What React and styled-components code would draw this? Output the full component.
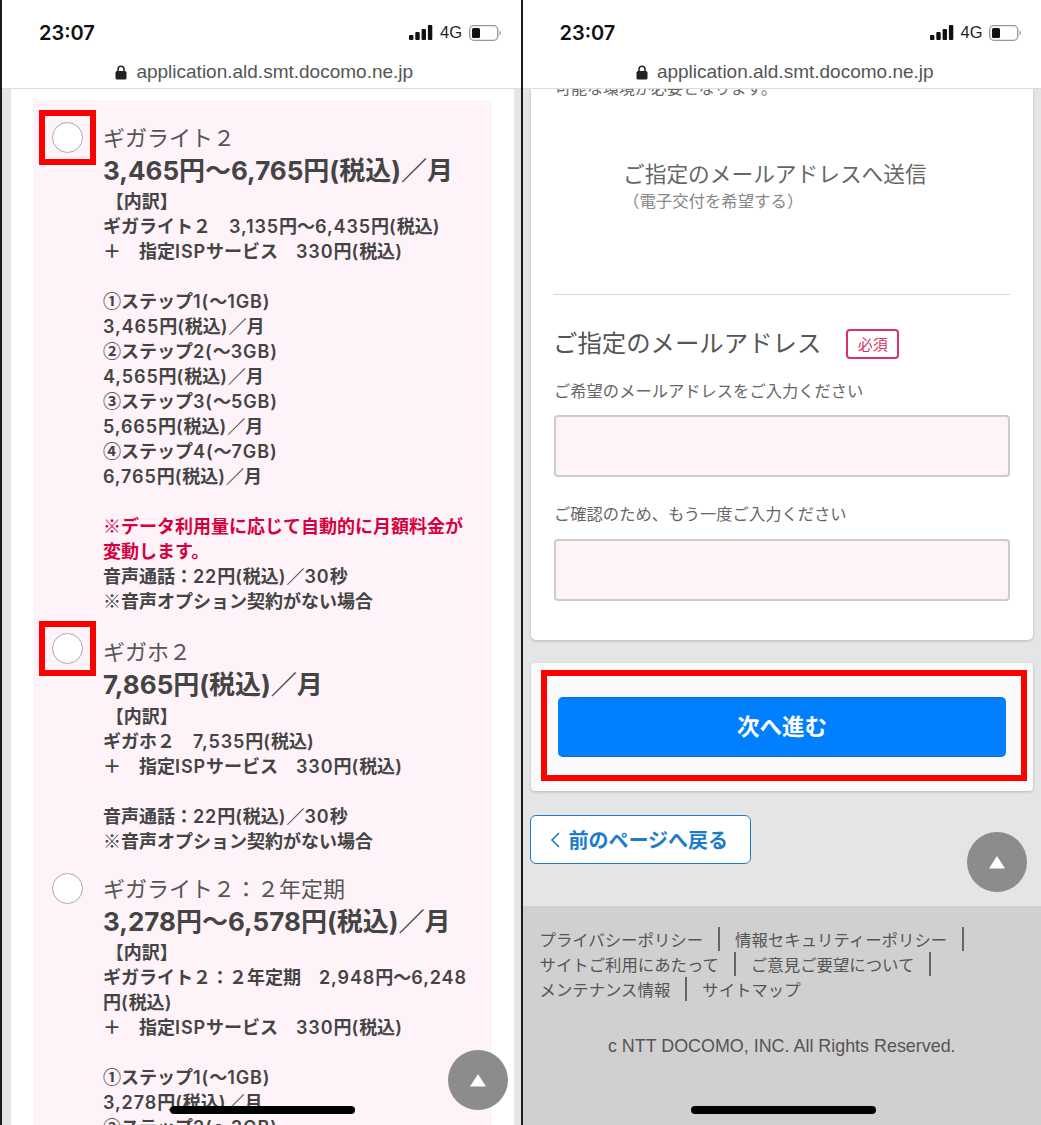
import React from 'react';
import styled, { createGlobalStyle } from 'styled-components';

const GlobalStyle = createGlobalStyle`
    html, body { margin: 0; padding: 0; background: #fff; }
    body { font-family: "Liberation Sans", "Noto Sans CJK JP", sans-serif; }
    * { box-sizing: border-box; }
`

const plans = [
    {
        name: 'ギガライト２',
        price: '3,465円〜6,765円(税込)／月',
        marked: true,
        titleGap: 12,
        priceGap: 1.5,
        lines: [
            'ギガライト２　3,135円〜6,435円(税込)',
            '＋　指定ISPサービス　330円(税込)',
            '',
            '①ステップ1(〜1GB)', '3,465円(税込)／月',
            '②ステップ2(〜3GB)', '4,565円(税込)／月',
            '③ステップ3(〜5GB)', '5,665円(税込)／月',
            '④ステップ4(〜7GB)', '6,765円(税込)／月',
            '',
        ],
        warn: ['※データ利用量に応じて自動的に月額料金が', '変動します。'],
        tail: ['音声通話：22円(税込)／30秒', '※音声オプション契約がない場合'],
    },
    {
        name: 'ギガホ２',
        price: '7,865円(税込)／月',
        marked: true,
        titleGap: 15,
        priceGap: 3.5,
        lines: ['ギガホ２　7,535円(税込)', '＋　指定ISPサービス　330円(税込)', ''],
        tail: ['音声通話：22円(税込)／30秒', '※音声オプション契約がない場合'],
    },
    {
        name: 'ギガライト２：２年定期',
        price: '3,278円〜6,578円(税込)／月',
        titleGap: 12,
        priceGap: 2,
        lines: [
            'ギガライト２：２年定期　2,948円〜6,248',
            '円(税込)',
            '＋　指定ISPサービス　330円(税込)',
            '',
            '①ステップ1(〜1GB)', '3,278円(税込)／月', '②ステップ2(〜3GB)',
        ],
    },
];

const footerRows = [
    [['プライバシーポリシー', true], ['情報セキュリティーポリシー', true]],
    [['サイトご利用にあたって', true], ['ご意見ご要望について', true]],
    [['メンテナンス情報', true], ['サイトマップ', false]],
];

// latin runs get a little more room, circled digits and ※ must come from the CJK font
function splitRuns(line) {
    return line.split(/([①②③④※]|[0-9A-Za-z,()]+)/).map((part, i) => {
        if (i % 2 === 0) return part;
        return /^[①②③④※]$/.test(part) ? <Mark key={i}>{part}</Mark> : <Latin key={i}>{part}</Latin>;
    });
}

function StatusHeader() {
    return (
        <Header>
            <StatusRow>
                <Clock>23:07</Clock>
                <StatusRight>
                    <svg width="24" height="15" viewBox="0 0 24 15">
                        <rect x="0" y="10" width="4.4" height="5" rx="1" fill="#111" />
                        <rect x="6.3" y="7" width="4.4" height="8" rx="1" fill="#111" />
                        <rect x="12.6" y="4" width="4.4" height="11" rx="1" fill="#111" />
                        <rect x="18.9" y="0" width="4.4" height="15" rx="1" fill="#111" />
                    </svg>
                    <Network>4G</Network>
                    <svg width="32" height="16" viewBox="0 0 32 16">
                        <rect x="0.7" y="0.7" width="28" height="14.6" rx="4" fill="none" stroke="#999" strokeWidth="1.3" />
                        <rect x="3" y="3" width="8" height="10" rx="1.5" fill="#111" />
                        <path d="M30.5 5.5c1 .6 1.4 1.4 1.4 2.5s-.4 1.9-1.4 2.5z" fill="#999" />
                    </svg>
                </StatusRight>
            </StatusRow>
            <UrlRow>
                <svg width="12" height="15" viewBox="0 0 12 15">
                    <path d="M3 6.5V4.2a3 3 0 0 1 6 0v2.3" fill="none" stroke="#222" strokeWidth="1.5" />
                    <rect x="0.5" y="6" width="11" height="8.6" rx="1.6" fill="#222" />
                </svg>
                <span>application.ald.smt.docomo.ne.jp</span>
            </UrlRow>
        </Header>
    )
}

function Overlay({ right, bottom }) {
    return (
        <>
            <ScrollTop $right={right} $bottom={bottom}>
                <svg width="18" height="14" viewBox="0 0 18 14"><path d="M9 1l8 12.5H1z" fill="#fff" /></svg>
            </ScrollTop>
            <HomeBar />
        </>
    )
}

function App() {
    return (
        <Page>
            <GlobalStyle />
            <Phone>
                <StatusHeader />
                <LeftBody>
                    <Card>
                        <PlanPanel>
                            {plans.map((plan) => (
                                <Plan key={plan.name}>
                                    <RadioCell $marked={plan.marked}><Radio /></RadioCell>
                                    <div>
                                        <PlanName $gap={plan.titleGap}>{plan.name}</PlanName>
                                        <PlanPrice $gap={plan.priceGap}>{plan.price}</PlanPrice>
                                        <Detail>&thinsp;【内訳】</Detail>
                                        {plan.lines.map((line, i) => <Detail key={i}>{splitRuns(line)}</Detail>)}
                                        {plan.warn && plan.warn.map((line) => <Detail key={line} $warn>{splitRuns(line)}</Detail>)}
                                        {plan.tail && plan.tail.map((line) => <Detail key={line}>{splitRuns(line)}</Detail>)}
                                    </div>
                                </Plan>
                            ))}
                        </PlanPanel>
                    </Card>
                </LeftBody>
                <Overlay right={12.5} bottom={15} />
            </Phone>
            <Phone>
                <StatusHeader />
                <RightBody>
                    <FormCard>
                        <CutText>可能な環境が必要となります。</CutText>
                        <SendBlock>
                            <SendTitle>ご指定のメールアドレスへ送信</SendTitle>
                            <SendSub>（電子交付を希望する）</SendSub>
                        </SendBlock>
                        <Divider />
                        <FieldHead>
                            <FieldTitle>ご指定のメールアドレス</FieldTitle>
                            <Required>必須</Required>
                        </FieldHead>
                        <FieldLabel>ご希望のメールアドレスをご入力ください</FieldLabel>
                        <TextBox />
                        <FieldLabel $second>ご確認のため、もう一度ご入力ください</FieldLabel>
                        <TextBox />
                    </FormCard>
                    <ActionCard>
                        <ActionMark>
                            <NextButton>次へ進む</NextButton>
                        </ActionMark>
                    </ActionCard>
                    <BackButton>
                        <svg width="12" height="18" viewBox="0 0 12 18"><path d="M10 2L3 9l7 7" fill="none" stroke="#1b7ccc" strokeWidth="1.6" /></svg>
                        前のページへ戻る
                    </BackButton>
                    <Footer>
                        <FooterLinks>
                            {footerRows.map((row, r) => (
                                <FooterRow key={r}>
                                    {row.map(([label, sep]) => <FooterLink key={label} $sep={sep}>{label}</FooterLink>)}
                                </FooterRow>
                            ))}
                        </FooterLinks>
                        <Copyright>c NTT DOCOMO, INC. All Rights Reserved.</Copyright>
                    </Footer>
                </RightBody>
                <Overlay right={14} bottom={233} />
            </Phone>
        </Page>
    )
}

export default App;

const Page = styled.div`
    display: flex;
    width: 1041px;
    height: 1125px;
    overflow: hidden;
`

const Phone = styled.div`
    position: relative;
    display: flex;
    flex-direction: column;
    flex: 0 0 520.5px;
    height: 1125px;
    overflow: hidden;
    border-left: 2px solid #1c1c1c;
    background: #e5e5e5;
`

const Header = styled.div`
    flex: none;
    height: 89px;
    background: #fff;
    border-bottom: 1px solid #ddd;
    position: relative;
    z-index: 1;
`

const StatusRow = styled.div`
    display: flex;
    align-items: center;
    justify-content: space-between;
    height: 65px;
    padding: 0 20px 0 37px;
`

const Clock = styled.span`
    font-family: Inter, sans-serif;
    font-size: 20px;
    font-weight: 600;
    color: #111;
`

const StatusRight = styled.div`
    display: flex;
    align-items: center;
    gap: 6.5px;
`

const Network = styled.span`
    font-size: 16.5px;
    color: #222;
`

const UrlRow = styled.div`
    display: flex;
    align-items: center;
    justify-content: center;
    gap: 9px;
    font-size: 19px;
    color: #555;
    margin-left: 6px;
    margin-top: -4px;
`

const LeftBody = styled.div`
    flex: 1;
    min-height: 0;
    padding: 0 6.5px 0 9px;
`

const Card = styled.div`
    height: 100%;
    background: #fff;
    padding: 11px 22px 0;
`

const PlanPanel = styled.div`
    background: #fdf3f9;
    padding: 10px 0 0 6px;
    height: 100%;
    overflow: hidden;
    color: #444;
    font-family: Inter, "Noto Sans CJK JP", sans-serif;
`

const Plan = styled.div`
    display: grid;
    grid-template-columns: 64px 1fr;
    padding-right: 20px;
    margin-bottom: 7px;
`

const RadioCell = styled.div`
    width: 57px;
    height: 55px;
    display: flex;
    align-items: center;
    justify-content: center;
    border: 6px solid ${(p) => (p.$marked ? '#ff0000' : 'transparent')};
`

const Radio = styled.span`
    width: 31px;
    height: 31px;
    border-radius: 50%;
    border: 1px solid #aaa;
    background: #fff;
`

const PlanName = styled.div`
    font-size: 22px;
    line-height: 33px;
    height: 33px;
    margin-top: ${(p) => p.$gap}px;
    color: #555;
`

const PlanPrice = styled.div`
    font-size: 26px;
    font-weight: 700;
    line-height: 32px;
    color: #444;
    margin-bottom: ${(p) => p.$gap}px;
    white-space: nowrap;
`

const Detail = styled.div`
    font-size: 18px;
    font-weight: 700;
    line-height: 25px;
    height: 25px;
    white-space: nowrap;
    color: ${(p) => (p.$warn ? '#d6003f' : '#444')};
`

const Mark = styled.span`
    font-family: "Noto Sans CJK JP", sans-serif;
    line-height: 1;
`

const Latin = styled.span`
    font-weight: 600;
    letter-spacing: 0.9px;
`

const RightBody = styled.div`
    flex: 1;
    min-height: 0;
    display: flex;
    flex-direction: column;
`

const FormCard = styled.div`
    margin: 0 8px 0 8.5px;
    height: 551px;
    background: #fff;
    border-radius: 0 0 5px 5px;
    box-shadow: 0 1px 3px rgba(0, 0, 0, 0.2);
    padding: 0 22px;
    overflow: hidden;
`

const CutText = styled.div`
    font-size: 16px;
    line-height: 20px;
    margin-top: -10px;
    padding-left: 2px;
    color: #666;
`

const SendBlock = styled.div`
    height: 195px;
    padding: 60px 0 0 70px;
`

const SendTitle = styled.div`
    font-size: 21.7px;
    line-height: 32px;
    color: #666;
`

const SendSub = styled.div`
    font-size: 16.4px;
    line-height: 20px;
    color: #888;
`

const Divider = styled.div`
    height: 1px;
    background: #d8d8d8;
    width: 457px;
`

const FieldHead = styled.div`
    display: flex;
    align-items: center;
    gap: 25px;
    margin-top: 30px;
    height: 32px;
`

const FieldTitle = styled.div`
    font-size: 24.4px;
    color: #555;
`

const Required = styled.span`
    width: 53px;
    height: 30px;
    margin-top: 5px;
    display: flex;
    align-items: center;
    justify-content: center;
    border: 2px solid #d9345f;
    border-radius: 4px;
    font-size: 15px;
    color: #d9345f;
`

const FieldLabel = styled.div`
    font-size: 16.3px;
    line-height: 24px;
    color: #666;
    padding-left: 1px;
    margin: ${(p) => (p.$second ? '25px 0 13px' : '22px 0 12px')};
`

const TextBox = styled.div`
    width: 456px;
    height: 62px;
    margin-left: 1px;
    background: #fdf3f9;
    border: 2px solid #ccc;
    border-radius: 4px;
`

const ActionCard = styled.div`
    margin: 23px 8px 0 8.5px;
    height: 128px;
    background: #fafafa;
    border-radius: 4px;
    box-shadow: 0 1px 3px rgba(0, 0, 0, 0.2);
    padding: 7px 6px 0 10px;
`

const ActionMark = styled.div`
    height: 111px;
    border: 6px solid #ff0000;
    padding: 21px 15px 0 11px;
`

const NextButton = styled.div`
    height: 60px;
    display: flex;
    align-items: center;
    justify-content: center;
    padding-bottom: 4px;
    background: #0080ff;
    border-radius: 5px;
    border-top: 1px solid #0a70d6;
    border-bottom: 1px solid #0a70d6;
    color: #fff;
    font-size: 22.5px;
    font-weight: 700;
`

const BackButton = styled.div`
    display: flex;
    align-items: center;
    gap: 8px;
    width: 221px;
    height: 49px;
    margin: 24px 0 0 7px;
    padding-left: 18px;
    background: #fff;
    border: 1.5px solid #1b7ccc;
    border-radius: 6px;
    color: #1b7ccc;
    font-size: 20px;
    font-weight: 700;
`

const Footer = styled.div`
    flex: 1;
    margin-top: 42px;
    background: #d0d0d0;
    padding: 21px 0 0 17px;
    color: #555;
`

const FooterLinks = styled.div`
    display: flex;
    flex-direction: column;
`

const FooterRow = styled.div`
    display: flex;
    align-items: center;
    height: 24.7px;
`

const FooterLink = styled.span`
    font-size: 16.4px;
    ${(p) => p.$sep && `
        padding-right: 15px;
        margin-right: 15px;
        border-right: 2px solid #666;
    `}
`

const Copyright = styled.div`
    margin: 33px 0 0 -17px;
    text-align: center;
    font-size: 17.9px;
    line-height: 24px;
    color: #555;
`

const ScrollTop = styled.div`
    position: absolute;
    right: ${(p) => p.$right}px;
    bottom: ${(p) => p.$bottom}px;
    width: 60px;
    height: 60px;
    border-radius: 50%;
    background: #8c8c8c;
    display: flex;
    align-items: center;
    justify-content: center;
    z-index: 2;
`

const HomeBar = styled.div`
    position: absolute;
    left: 168px;
    bottom: 11px;
    width: 185px;
    height: 8px;
    border-radius: 4px;
    background: #000;
    z-index: 2;
`
